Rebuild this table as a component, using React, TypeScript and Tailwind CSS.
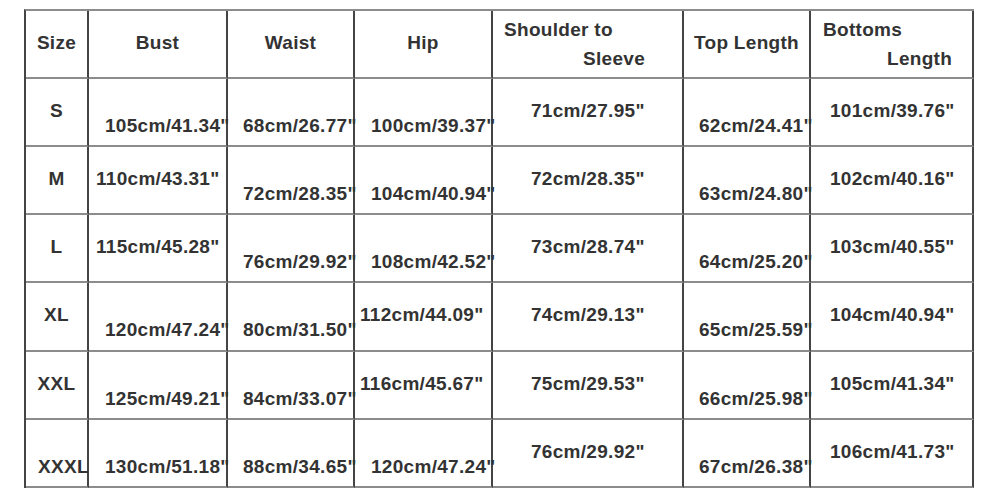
type Cell = { t: string; x: number; low?: boolean };

// left padding per cell, px from the column's left line
const PAD: Record<number, string> = {
  0: "justify-center",
  5: "pl-[5px]",
  7: "pl-[7px]",
  12: "pl-[12px]",
  15: "pl-[15px]",
  16: "pl-[16px]",
  19: "pl-[19px]",
  38: "pl-[38px]",
};

const rows: { h: string; cells: Cell[] }[] = [
  {
    h: "h-[68px]",
    cells: [
      { t: "S", x: 0 },
      { t: "105cm/41.34\"", x: 16, low: true },
      { t: "68cm/26.77\"", x: 15, low: true },
      { t: "100cm/39.37\"", x: 16, low: true },
      { t: "71cm/27.95\"", x: 38 },
      { t: "62cm/24.41\"", x: 15, low: true },
      { t: "101cm/39.76\"", x: 19 },
    ],
  },
  {
    h: "h-[68px]",
    cells: [
      { t: "M", x: 0 },
      { t: "110cm/43.31\"", x: 7 },
      { t: "72cm/28.35\"", x: 15, low: true },
      { t: "104cm/40.94\"", x: 16, low: true },
      { t: "72cm/28.35\"", x: 38 },
      { t: "63cm/24.80\"", x: 15, low: true },
      { t: "102cm/40.16\"", x: 19 },
    ],
  },
  {
    h: "h-[68px]",
    cells: [
      { t: "L", x: 0 },
      { t: "115cm/45.28\"", x: 7 },
      { t: "76cm/29.92\"", x: 15, low: true },
      { t: "108cm/42.52\"", x: 16, low: true },
      { t: "73cm/28.74\"", x: 38 },
      { t: "64cm/25.20\"", x: 15, low: true },
      { t: "103cm/40.55\"", x: 19 },
    ],
  },
  {
    h: "h-[69px]",
    cells: [
      { t: "XL", x: 0 },
      { t: "120cm/47.24\"", x: 16, low: true },
      { t: "80cm/31.50\"", x: 15, low: true },
      { t: "112cm/44.09\"", x: 5 },
      { t: "74cm/29.13\"", x: 38 },
      { t: "65cm/25.59\"", x: 15, low: true },
      { t: "104cm/40.94\"", x: 19 },
    ],
  },
  {
    h: "h-[68px]",
    cells: [
      { t: "XXL", x: 0 },
      { t: "125cm/49.21\"", x: 16, low: true },
      { t: "84cm/33.07\"", x: 15, low: true },
      { t: "116cm/45.67\"", x: 5 },
      { t: "75cm/29.53\"", x: 38 },
      { t: "66cm/25.98\"", x: 15, low: true },
      { t: "105cm/41.34\"", x: 19 },
    ],
  },
  {
    h: "h-[68px]",
    cells: [
      { t: "XXXL", x: 12, low: true },
      { t: "130cm/51.18\"", x: 16, low: true },
      { t: "88cm/34.65\"", x: 15, low: true },
      { t: "120cm/47.24\"", x: 16, low: true },
      { t: "76cm/29.92\"", x: 38 },
      { t: "67cm/26.38\"", x: 15, low: true },
      { t: "106cm/41.73\"", x: 19 },
    ],
  },
];

const cellBase =
  "border-r-2 border-b-2 border-r-[#444] border-b-[#8c8c8c] whitespace-nowrap";

function HeadCell({ children }: { children: React.ReactNode }) {
  return (
    <div className={`${cellBase} flex h-[68px] justify-center pt-[21px]`}>
      <span className="leading-[22px]">{children}</span>
    </div>
  );
}

function TwoLineHead({ a, b, pa, pb }: { a: string; b: string; pa: string; pb: string }) {
  return (
    <div className={`${cellBase} h-[68px] pt-[4px] leading-[29px]`}>
      <div className={pa}>{a}</div>
      <div className={pb}>{b}</div>
    </div>
  );
}

export default function App() {
  return (
    <div className="h-[498px] w-[1000px] overflow-hidden bg-white pl-[24px] pt-[9px]">
      <div
        className="grid w-max grid-cols-[63px_139px_127px_138px_191px_127px_163px] border-l-2 border-t-2 border-l-[#444] border-t-[#8c8c8c] text-[19px] font-bold tracking-[0.3px] text-[#333]"
        style={{ fontFamily: '"Liberation Sans", Arial, sans-serif' }}
      >
        <HeadCell>Size</HeadCell>
        <HeadCell>Bust</HeadCell>
        <HeadCell>Waist</HeadCell>
        <HeadCell>Hip</HeadCell>
        <TwoLineHead a="Shoulder to" b="Sleeve" pa="pl-[11px]" pb="pl-[90px]" />
        <HeadCell>Top Length</HeadCell>
        <TwoLineHead a="Bottoms" b="Length" pa="pl-[12px]" pb="pl-[76px]" />

        {rows.map((r, ri) =>
          r.cells.map((c, ci) => (
            <div
              key={`${ri}-${ci}`}
              className={`${cellBase} ${r.h} flex ${PAD[c.x]} ${
                c.low ? "pt-[36px]" : "pt-[21px]"
              }`}
            >
              <span className="leading-[22px]">{c.t}</span>
            </div>
          )),
        )}
      </div>
    </div>
  );
}
